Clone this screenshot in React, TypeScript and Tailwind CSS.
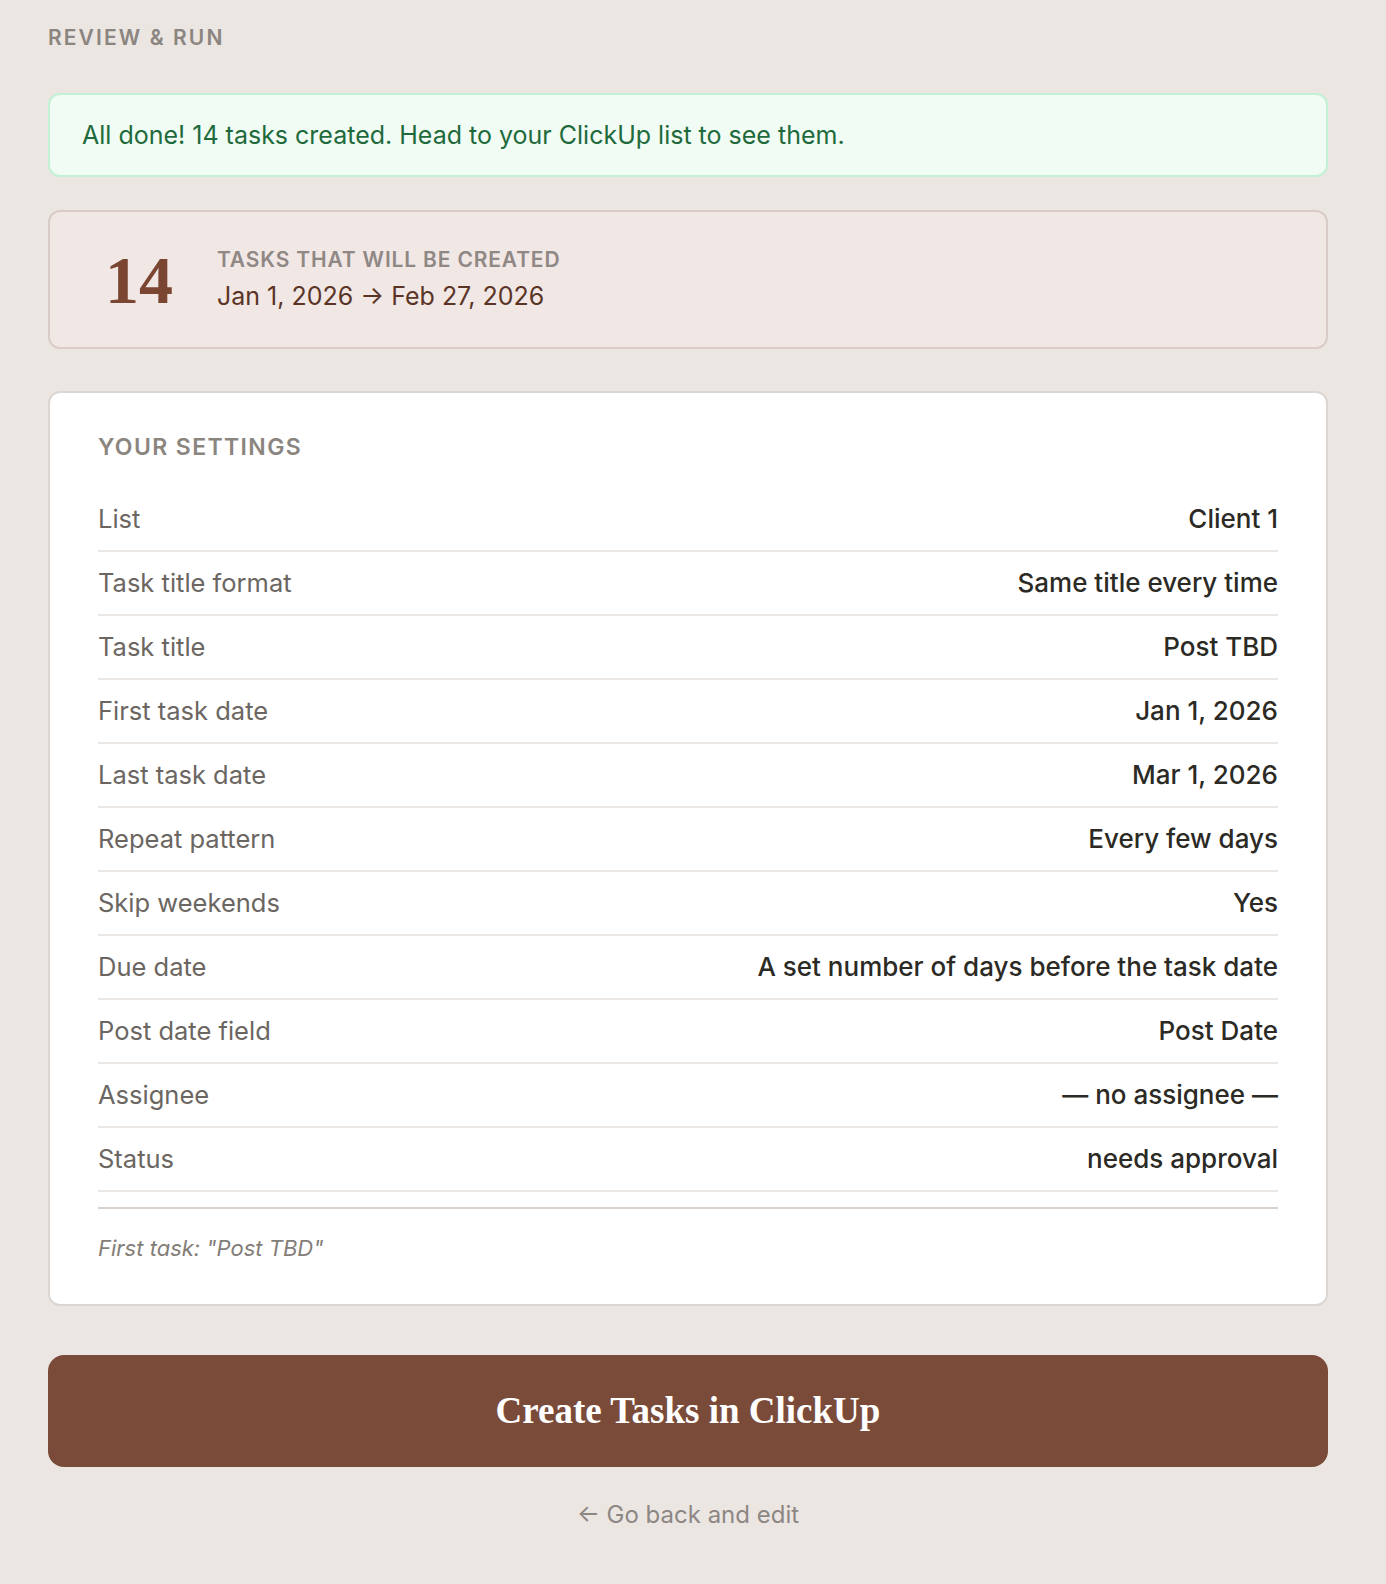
import React from "react";

const rows: [string, string][] = [
  ["List", "Client 1"],
  ["Task title format", "Same title every time"],
  ["Task title", "Post TBD"],
  ["First task date", "Jan 1, 2026"],
  ["Last task date", "Mar 1, 2026"],
  ["Repeat pattern", "Every few days"],
  ["Skip weekends", "Yes"],
  ["Due date", "A set number of days before the task date"],
  ["Post date field", "Post Date"],
  ["Assignee", "— no assignee —"],
  ["Status", "needs approval"],
];

export default function App() {
  return (
    <div
      className="min-h-[1584px] w-full bg-[#ece6e3] pl-12 pt-6 pb-10"
      style={{ fontFamily: "Inter, Roboto, 'Liberation Sans', sans-serif" }}
    >
      <div className="w-[1280px]">
        <div className="text-[21px] leading-[28px] font-semibold tracking-[0.1em] text-[#8b8580]">
          REVIEW &amp; RUN
        </div>

        <div className="mt-[41px] h-[84px] rounded-xl border-2 border-[#c3f1d6] bg-[#f0fcf4] pl-8 flex items-center">
          <span className="text-[25px] leading-[32px] text-[#1f6a3c]">
            All done! 14 tasks created. Head to your ClickUp list to see them.
          </span>
        </div>

        <div className="mt-[33px] h-[139px] rounded-xl border-2 border-[#d9cbc7] bg-[#f1e7e4] pl-[55px] flex items-center gap-[44px]">
          <div
            className="text-[68px] leading-none font-bold text-[#7a4632]"
            style={{ fontFamily: "'Liberation Serif', 'DejaVu Serif', serif" }}
          >
            14
          </div>
          <div className="flex flex-col gap-[4px]">
            <div className="text-[21px] leading-[28px] font-semibold tracking-[0.04em] text-[#8f8884]">
              TASKS THAT WILL BE CREATED
            </div>
            <div className="text-[25px] leading-[36px] text-[#5a3526]">
              Jan 1, 2026 → Feb 27, 2026
            </div>
          </div>
        </div>

        <div className="mt-[42px] rounded-xl border-2 border-[#dcd6d2] bg-white px-12 pt-10 pb-10">
          <div className="text-[23px] leading-[28px] font-semibold tracking-[0.06em] text-[#8b8580]">
            YOUR SETTINGS
          </div>
          <div className="mt-[27px]">
            {rows.map(([k, v]) => (
              <div
                key={k}
                className="h-[64px] border-b-2 border-[#ebe7e5] flex items-center justify-between"
              >
                <span className="text-[25.5px] leading-[32px] text-[#6b6661]">{k}</span>
                <span className="text-[26px] leading-[32px] font-medium text-[#2c2a25]">{v}</span>
              </div>
            ))}
          </div>
          <div className="mt-[15px] border-t-2 border-[#d8d1cc] pt-[23px]">
            <span className="text-[22px] leading-[32px] italic text-[#837d78]">
              First task: "Post TBD"
            </span>
          </div>
        </div>

        <button
          className="mt-[49px] h-[112px] w-full rounded-2xl bg-[#7b4b3a] text-white text-[37px] font-bold flex items-center justify-center"
          style={{ fontFamily: "'Liberation Serif', 'DejaVu Serif', serif" }}
        >
          Create Tasks in ClickUp
        </button>

        <div className="mt-8 text-center text-[24px] leading-[32px] text-[#8d8783]">
          ← Go back and edit
        </div>
      </div>
    </div>
  );
}
